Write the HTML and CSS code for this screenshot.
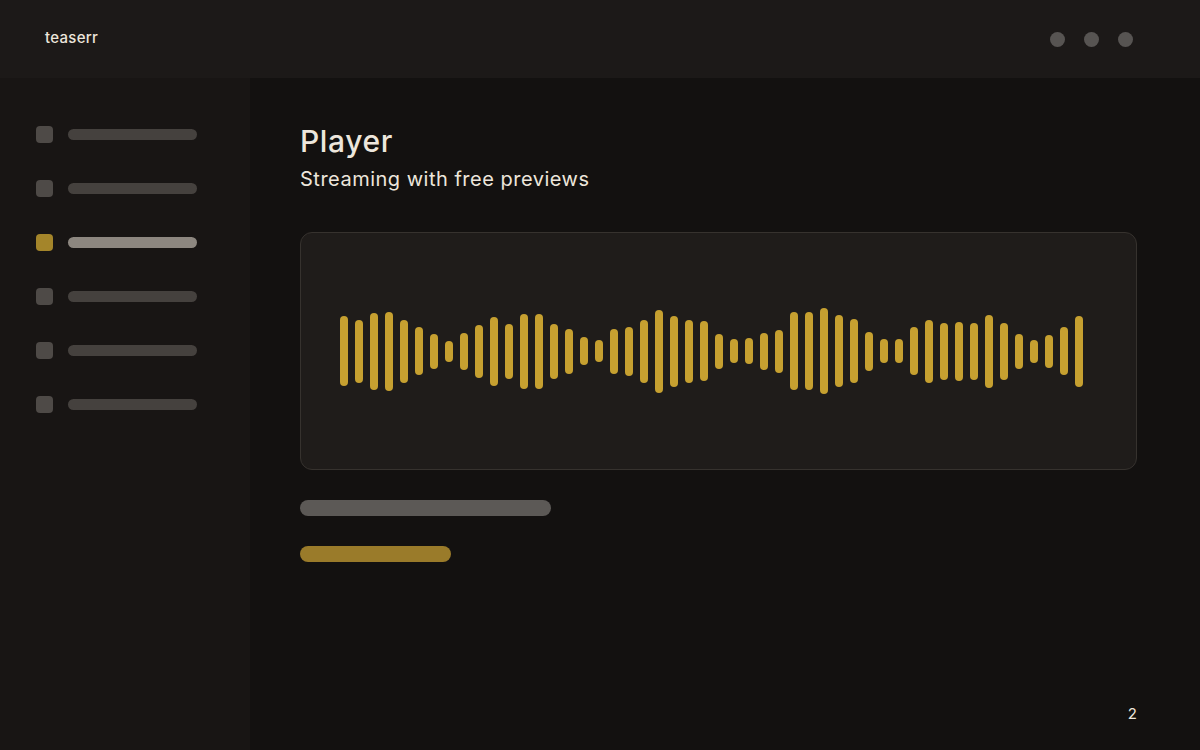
FILE: index.html
```html
<!DOCTYPE html>
<html lang="en">
<head>
  <meta charset="UTF-8">
  <title>teaserr - Player</title>
  <link rel="stylesheet" href="styles.css">
</head>
<body>
  <header class="topbar">
    <div class="logo">teaserr</div>
    <div class="dots">
      <span class="dot"></span>
      <span class="dot"></span>
      <span class="dot"></span>
    </div>
  </header>

  <div class="layout">
    <nav class="sidebar">
      <ul>
        <li><span class="nav-icon"></span><span class="nav-line"></span></li>
        <li><span class="nav-icon"></span><span class="nav-line"></span></li>
        <li class="active"><span class="nav-icon"></span><span class="nav-line"></span></li>
        <li><span class="nav-icon"></span><span class="nav-line"></span></li>
        <li><span class="nav-icon"></span><span class="nav-line"></span></li>
        <li><span class="nav-icon"></span><span class="nav-line"></span></li>
      </ul>
    </nav>

    <main class="content">
      <h1>Player</h1>
      <p class="subtitle">Streaming with free previews</p>

      <section class="wave-card">
        <div class="wave" id="wave"></div>
      </section>

      <div class="track track-title"></div>
      <div class="track track-progress"></div>

      <div class="page-num">2</div>
    </main>
  </div>

  <script>
    const heights = [70, 63, 77, 79, 63, 48, 35, 21, 37, 53, 69, 55, 75, 75, 55, 45, 28, 22, 45, 49,
      63, 83, 71, 63, 60, 35, 24, 26, 37, 43, 78, 78, 86, 72, 64, 39, 24, 24, 48, 63,
      57, 59, 57, 73, 57, 35, 23, 33, 48, 71];
    const wave = document.getElementById("wave");
    heights.forEach(h => {
      const bar = document.createElement("span");
      bar.className = "bar";
      bar.style.height = h + "px";
      wave.appendChild(bar);
    });
  </script>
</body>
</html>
```

FILE: styles.css
```css
body {
  margin: 0;
  width: 1200px;
  height: 750px;
  overflow: hidden;
  background: #131110;
  color: #ede6dc;
  font-family: Inter, "Open Sans", sans-serif;
}
.topbar {
  height: 78px;
  background: #1c1918;
  display: flex;
  align-items: center;
  justify-content: space-between;
  padding: 0 67px 0 45px;
  box-sizing: border-box;
}
.logo {
  font-size: 15px;
  font-weight: 500;
  letter-spacing: 0.3px;
  margin-top: -3px;
}
.dots {
  display: flex;
  gap: 19px;
}
.dot {
  width: 15px;
  height: 15px;
  border-radius: 50%;
  background: #575452;
}
.layout {
  display: flex;
  height: 672px;
}
.sidebar {
  width: 250px;
  background: #181514;
  padding-top: 48px;
  box-sizing: border-box;
}
.sidebar ul {
  list-style: none;
  margin: 0;
  padding: 0 0 0 36px;
}
.sidebar li {
  display: flex;
  align-items: center;
  gap: 15px;
  height: 17px;
  margin-bottom: 37px;
}
.nav-icon {
  width: 17px;
  height: 17px;
  border-radius: 4px;
  background: #4e4a47;
}
.nav-line {
  width: 129px;
  height: 11px;
  border-radius: 6px;
  background: #45413e;
}
.sidebar li.active .nav-icon {
  background: #a4852a;
}
.sidebar li.active .nav-line {
  background: #8d8780;
}
.content {
  flex: 1;
  position: relative;
  padding: 43px 63px 0 50px;
}
h1 {
  margin: 0;
  font-size: 30px;
  font-weight: 500;
  letter-spacing: 0.6px;
  line-height: 40px;
}
.subtitle {
  margin: 0;
  font-size: 20px;
  letter-spacing: 0.5px;
  line-height: 36px;
}
.wave-card {
  margin-top: 35px;
  height: 238px;
  background: #1f1c1a;
  border: 1px solid #36322e;
  border-radius: 12px;
  box-sizing: border-box;
  display: flex;
  align-items: center;
  padding-left: 39px;
}
.wave {
  display: flex;
  align-items: center;
  gap: 7px;
}
.bar {
  width: 8px;
  border-radius: 4px;
  background: #c6a030;
}
.track {
  height: 16px;
  border-radius: 8px;
}
.track-title {
  margin-top: 30px;
  width: 251px;
  background: #5c5956;
}
.track-progress {
  margin-top: 30px;
  width: 151px;
  background: #9a7b2a;
}
.page-num {
  position: absolute;
  right: 63px;
  bottom: 27px;
  font-size: 15px;
}
```
